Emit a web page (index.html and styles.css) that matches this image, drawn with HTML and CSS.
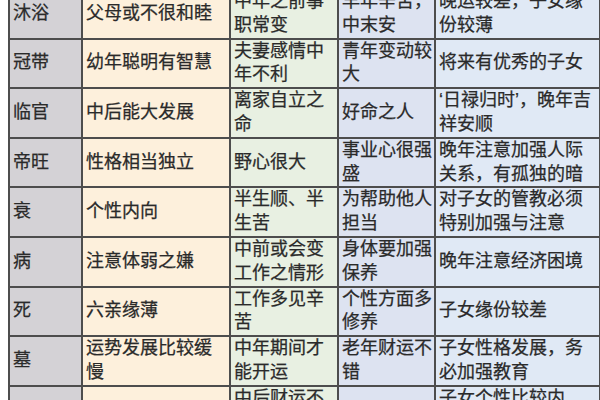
FILE: index.html
```html
<!DOCTYPE html>
<html lang="zh-CN">
<head>
<meta charset="utf-8">
<title>十二长生</title>
<link rel="stylesheet" href="styles.css">
</head>
<body>
<table class="grid">
  <colgroup>
    <col class="c-name">
    <col class="c-a">
    <col class="c-b">
    <col class="c-c">
    <col class="c-d">
  </colgroup>
  <tbody>
    <tr><td class="name">沐浴</td><td class="a">父母或不很和睦</td><td class="b">中年之前事<br>职常变</td><td class="c">早年辛苦，<br>中末安</td><td class="d">晚运较差，子女缘<br>份较薄</td></tr>
    <tr><td class="name">冠带</td><td class="a">幼年聪明有智慧</td><td class="b">夫妻感情中<br>年不利</td><td class="c">青年变动较<br>大</td><td class="d">将来有优秀的子女</td></tr>
    <tr><td class="name">临官</td><td class="a">中后能大发展</td><td class="b">离家自立之<br>命</td><td class="c">好命之人</td><td class="d">‘日禄归时’，晚年吉<br>祥安顺</td></tr>
    <tr><td class="name">帝旺</td><td class="a">性格相当独立</td><td class="b">野心很大</td><td class="c">事业心很强<br>盛</td><td class="d">晚年注意加强人际<br>关系，有孤独的暗</td></tr>
    <tr><td class="name">衰</td><td class="a">个性内向</td><td class="b">半生顺、半<br>生苦</td><td class="c">为帮助他人<br>担当</td><td class="d">对子女的管教必须<br>特别加强与注意</td></tr>
    <tr><td class="name">病</td><td class="a">注意体弱之嫌</td><td class="b">中前或会变<br>工作之情形</td><td class="c">身体要加强<br>保养</td><td class="d">晚年注意经济困境</td></tr>
    <tr><td class="name">死</td><td class="a">六亲缘薄</td><td class="b">工作多见辛<br>苦</td><td class="c">个性方面多<br>修养</td><td class="d">子女缘份较差</td></tr>
    <tr><td class="name">墓</td><td class="a">运势发展比较缓<br>慢</td><td class="b">中年期间才<br>能开运</td><td class="c">老年财运不<br>错</td><td class="d">子女性格发展，务<br>必加强教育</td></tr>
    <tr><td class="name">绝</td><td class="a">早年多波折</td><td class="b">中后财运不<br>佳</td><td class="c">晚年较孤独</td><td class="d">子女个性比较内<br>向</td></tr>
  </tbody>
</table>
</body>
</html>
```
FILE: styles.css
```css
html, body {
  margin: 0;
  padding: 0;
  background: #ffffff;
  overflow: hidden;
}

body {
  padding-left: 8px;
}

.grid {
  margin-top: -12px;
  border-collapse: collapse;
  table-layout: fixed;
  width: 591px;
  font-family: "Liberation Sans", "Noto Sans CJK SC", sans-serif;
  font-size: 18px;
  line-height: 23.8px;
  color: #2a2a2a;
  -webkit-text-stroke: 0.25px #2a2a2a;
}

.c-name { width: 73px; }
.c-a { width: 148px; }
.c-b { width: 108px; }
.c-c { width: 97px; }
.c-d { width: 165px; }

.grid td {
  border: 2px solid #4d4d4d;
  padding: 0 2px 0 3px;
  vertical-align: middle;
  text-align: left;
  white-space: nowrap;
  overflow: hidden;
}

.name { background: #d4d2d6; }
.a { background: #fdf0dc; }
.b { background: #e8f0e2; }
.c { background: #dde3f1; }
.d { background: #e0e9f5; }
```
